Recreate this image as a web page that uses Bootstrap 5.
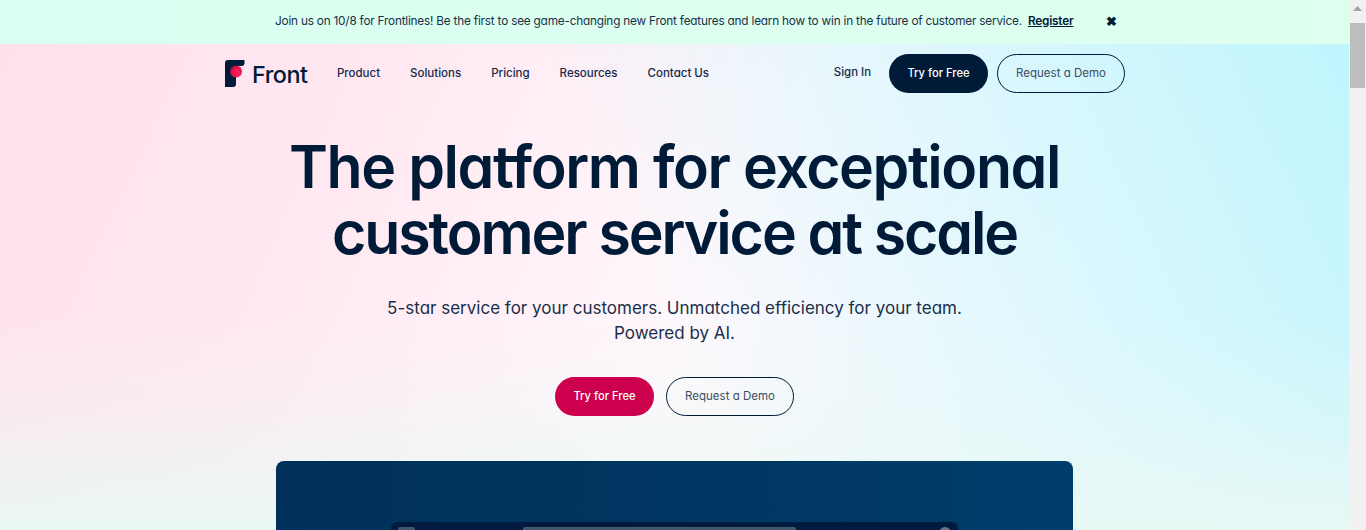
<!DOCTYPE html>
<html lang="en">
  <head>
    <meta charset="UTF-8" />
    <title>Front</title>
    <link
      rel="stylesheet"
      href="https://cdn.jsdelivr.net/npm/bootstrap@5.3.0/dist/css/bootstrap.min.css"
    />
    <style>
      html, body { height: 530px; overflow: hidden; }
      body { font-family: "Inter", "Liberation Sans", sans-serif; color: #001b38; font-feature-settings: "cv11" 1; font-variant-ligatures: none; }
      .page-shell { height: 530px; overflow: hidden; }
      .page-main { width: 1349px; height: 530px; overflow: hidden; }
      .fake-scroll { width: 17px; background: #f1f1f1; }
      .fake-scroll-arrow { height: 17px; }
      .fake-scroll-arrow svg { display: block; margin: 6px auto 0; }
      .fake-scroll-thumb { height: 65px; margin: 0 1px; background: #bdbdbd; }
      .promo-bar { height: 44px; background: linear-gradient(90deg, #d8fff0, #dfffef); font-size: 11.8px; letter-spacing: -0.21px; padding-left: 275px; color: #1b2f4a; }
      .promo-bar a { color: #001b38; font-weight: 600; margin-left: 6px; }
      .promo-close { margin-left: 33px; margin-bottom: 1px; font-size: 13px; line-height: 1; letter-spacing: 0; color: #001b38; }
      .hero-bg {
        height: 486px;
        background:
          linear-gradient(180deg, rgba(232, 247, 243, 0) 56%, rgba(232, 247, 243, 0.3) 75%, rgba(232, 248, 244, 0.95) 100%),
          linear-gradient(65deg, rgba(192, 245, 253, 0) 48%, rgba(192, 245, 253, 0.55) 75%, rgba(192, 245, 253, 0.85) 92%, #c0f5fd 100%),
          linear-gradient(115deg, #ffe1ec 0%, #ffe8f1 25%, #fff8fc 52%, #fbfeff 100%);
      }
      .top-nav { height: 58px; padding: 0 224px 0 225px; }
      .brand-logo { margin-top: 2px; }
      .brand-word { font-size: 23.4px; font-weight: 500; letter-spacing: -0.5px; line-height: 1; margin: 3px 0 0 7px; }
      .nav-items { gap: 30px; margin-left: 29.5px; margin-top: 1px; font-size: 11.5px; font-weight: 500; }
      .nav-items a, .signin-link { color: #16294a; text-decoration: none; }
      .signin-link { font-size: 11.4px; font-weight: 500; margin-right: 18px; }
      .pill-btn { height: 39px; border-radius: 20px; font-size: 11.2px; padding: 0; display: inline-flex; align-items: center; justify-content: center; }
      .pill-dark { width: 99px; background: #001b38; color: #fff; font-weight: 500; margin-right: 9px; }
      .pill-outline { width: 128px; border: 1px solid #001b38; color: #3a4d66; background: transparent; font-size: 11.5px; }
      .nav-demo { padding-top: 1px; }
      .pill-red { width: 99px; background: #cc004c; color: #fff; font-weight: 500; margin-right: 12px; }
      .hero-title { font-size: 59px; line-height: 66px; font-weight: 600; letter-spacing: -1.42px; margin: 32px 0 0; color: #001b38; }
      .hero-title-second { letter-spacing: -2.1px; }
      .hero-sub { font-size: 17px; line-height: 25px; margin: 30px 0 0; color: #1b2f4a; font-weight: 400; }
      .hero-actions { margin-top: 31px; }
      .demo-panel { width: 797px; height: 120px; margin: 45px auto 0 276px; border-radius: 8px 8px 0 0; background: linear-gradient(90deg, #003059, #003d6b); padding-top: 61px; }
      .demo-window { width: 567px; height: 40px; margin-left: 115px; background: #001b3d; border-radius: 6px 6px 0 0; padding: 5px 7px; }
      .demo-chip { width: 17px; height: 6px; background: #45566d; border-radius: 2px 2px 0 0; }
      .demo-search { width: 273px; height: 6px; background: #45566d; border-radius: 2px 2px 0 0; margin-left: 108px; }
      .demo-dot { width: 12px; height: 6px; background: #65748a; border-radius: 6px 6px 0 0; margin-left: auto; }
    </style>
  </head>
  <body>
    <div class="page-shell d-flex">
      <div class="page-main">
        <div class="promo-bar d-flex align-items-center">
          <span>Join us on 10/8 for Frontlines! Be the first to see game-changing new Front features and learn how to win in the future of customer service.</span>
          <a href="#">Register</a>
          <span class="promo-close fw-bold">✖</span>
        </div>
        <div class="hero-bg">
          <nav class="top-nav d-flex align-items-center">
            <svg class="brand-logo" width="20" height="28" viewBox="0 0 20 28" aria-hidden="true">
              <defs>
                <radialGradient id="logoDot" cx="0.65" cy="0.6" r="0.65">
                  <stop offset="0" stop-color="#ff1f5f" />
                  <stop offset="0.6" stop-color="#f0134f" />
                  <stop offset="1" stop-color="#a50f47" />
                </radialGradient>
              </defs>
              <path d="M3 0H19.5V3a3 3 0 0 1-3 3H13a2 2 0 0 0-2 2V24a3 3 0 0 1-3 3H0V3a3 3 0 0 1 3-3z" fill="#001b38" />
              <circle cx="11" cy="11.5" r="6" fill="url(#logoDot)" />
            </svg>
            <span class="brand-word">Front</span>
            <div class="nav-items d-flex">
              <a href="#">Product</a>
              <a href="#">Solutions</a>
              <a href="#">Pricing</a>
              <a href="#">Resources</a>
              <a href="#">Contact Us</a>
            </div>
            <div class="ms-auto d-flex align-items-center">
              <a class="signin-link" href="#">Sign In</a>
              <a class="btn pill-btn pill-dark" href="#">Try for Free</a>
              <a class="btn pill-btn pill-outline nav-demo" href="#">Request a Demo</a>
            </div>
          </nav>
          <div class="text-center">
            <h1 class="hero-title">The platform for exceptional<br /><span class="hero-title-second">customer service at scale</span></h1>
            <p class="hero-sub">5-star service for your customers. Unmatched efficiency for your team.<br />Powered by AI.</p>
            <div class="hero-actions d-flex justify-content-center">
              <a class="btn pill-btn pill-red" href="#">Try for Free</a>
              <a class="btn pill-btn pill-outline" href="#">Request a Demo</a>
            </div>
          </div>
          <div class="demo-panel">
            <div class="demo-window d-flex">
              <div class="demo-chip"></div>
              <div class="demo-search"></div>
              <div class="demo-dot"></div>
            </div>
          </div>
        </div>
      </div>
      <div class="fake-scroll">
        <div class="fake-scroll-arrow">
          <svg width="9" height="5" viewBox="0 0 9 5"><path d="M4.5 0L9 5H0z" fill="#a3a3a3" /></svg>
        </div>
        <div class="fake-scroll-thumb"></div>
      </div>
    </div>
    <script src="https://cdn.jsdelivr.net/npm/bootstrap@5.3.0/dist/js/bootstrap.bundle.min.js"></script>
  </body>
</html>
